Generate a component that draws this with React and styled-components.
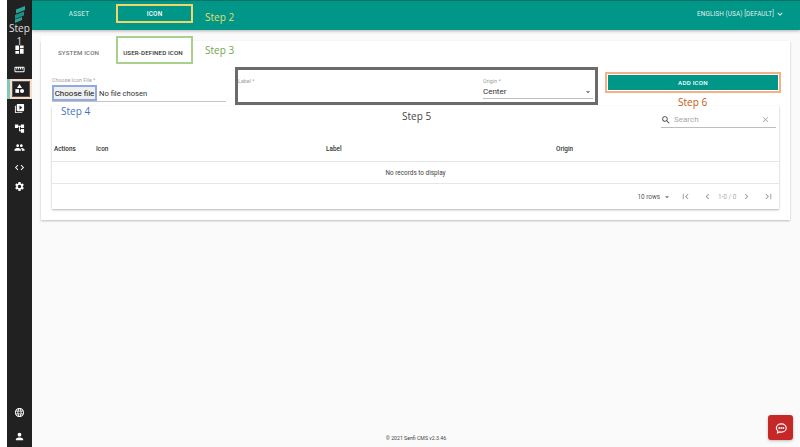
import React from "react";
import styled, { createGlobalStyle } from "styled-components";
import {
  MdDashboard,
  MdStraighten,
  MdCategory,
  MdVideoLibrary,
  MdAccountTree,
  MdPeople,
  MdCode,
  MdSettings,
  MdLanguage,
  MdPerson,
  MdKeyboardArrowDown,
  MdSearch,
  MdClear,
  MdFirstPage,
  MdLastPage,
  MdChevronLeft,
  MdChevronRight,
  MdArrowDropDown,
} from "react-icons/md";

const GlobalStyle = createGlobalStyle`
  html, body {
    margin: 0;
    padding: 0;
    background: #fafafa;
    font-family: Roboto, "Liberation Sans", sans-serif;
    overflow: hidden;
  }
  * { box-sizing: border-box; }
`;

const Page = styled.div`
  position: relative;
  width: 800px;
  height: 447px;
  display: flex;
  background: #fafafa;
  overflow: hidden;
`;

const Gutter = styled.div`
  width: 7px;
  background: #fff;
`;

const Sidebar = styled.nav`
  width: 25px;
  background: #212121;
  color: #fff;
  display: flex;
  flex-direction: column;
  align-items: center;
  padding-top: 6px;
  padding-bottom: 1px;
`;

const Logo = styled.svg`
  width: 12px;
  height: 17px;
  margin-bottom: 17px;
`;

const NavItem = styled.div`
  width: 25px;
  height: 19.6px;
  margin-top: ${({ $gap }) => $gap || 0}px;
  display: flex;
  align-items: center;
  justify-content: center;
  font-size: 11px;
  position: relative;
  ${({ $active }) =>
    $active &&
    `
    &::before {
      content: "";
      position: absolute;
      left: 0;
      top: 0;
      bottom: 0;
      width: 3px;
      background: #7fc9bb;
    }
    &::after {
      content: "";
      position: absolute;
      left: 3px;
      right: 0;
      top: 0;
      bottom: 0;
      border: 2px solid #f8dcc8;
      box-shadow: inset 0 0 0 1px #555;
    }
  `}
`;

const Spacer = styled.div`
  flex: 1;
`;

const Main = styled.div`
  flex: 1;
  display: flex;
  flex-direction: column;
  min-width: 0;
`;

const TopBar = styled.header`
  height: 30px;
  flex: none;
  background: #009688;
  border-top: 1px solid #0a6f66;
  box-shadow: 0 1px 3px rgba(0, 0, 0, 0.3);
  display: flex;
  align-items: center;
  color: #fff;
  padding-left: 10px;
  padding-right: 15px;
`;

const TopTab = styled.div`
  height: 19px;
  width: ${({ $active }) => ($active ? 77 : 74)}px;
  margin-top: -4px;
  display: flex;
  align-items: center;
  justify-content: center;
  font-size: 6.4px;
  font-weight: 500;
  letter-spacing: 0.2px;
  color: ${({ $active }) => ($active ? "#fff" : "rgba(255,255,255,0.72)")};
  border: ${({ $active }) => ($active ? "2px solid #f3d669" : "2px solid transparent")};
`;

const Locale = styled.div`
  margin-left: auto;
  margin-top: -3px;
  display: flex;
  align-items: center;
  gap: 1px;
  font-size: 6.4px;
  letter-spacing: 0.1px;
  color: rgba(255, 255, 255, 0.9);
  svg {
    font-size: 10px;
    color: #fff;
  }
`;

const Content = styled.div`
  flex: 1;
  min-height: 0;
`;

const Card = styled.section`
  margin: 11px 10px 0 9px;
  height: 179px;
  background: #fff;
  box-shadow: 0 1px 2px rgba(0, 0, 0, 0.25);
  padding: 0 11px;
`;

const Tabs = styled.div`
  height: 23px;
  display: flex;
  margin-left: -11px;
`;

const InnerTab = styled.div`
  width: ${({ $active }) => ($active ? 77 : 75)}px;
  height: 28px;
  margin-top: -5px;
  flex: none;
  display: flex;
  align-items: center;
  justify-content: center;
  padding-top: 5px;
  padding-right: ${({ $active }) => ($active ? 3 : 0)}px;
  font-size: 6.2px;
  font-weight: 500;
  letter-spacing: 0.1px;
  white-space: nowrap;
  background: #fff;
  color: ${({ $active }) => ($active ? "#333" : "#757575")};
  border: ${({ $active }) => ($active ? "2px solid #a9d18e" : "2px solid transparent")};
`;

const FormRow = styled.div`
  height: 42px;
  display: flex;
  align-items: flex-start;
`;

const FileField = styled.div`
  width: 174px;
  margin-top: 13px;
  margin-right: 9px;
  flex: none;
`;

const SmallLabel = styled.div`
  font-size: 5.4px;
  line-height: 7px;
  color: #9e9e9e;
`;

const FileRow = styled.div`
  height: 17px;
  margin-top: 1px;
  display: flex;
  align-items: center;
  gap: 2px;
  border-bottom: 1px solid #c4c4c4;
  font-size: 7.6px;
  color: #333;
`;

const FileButton = styled.div`
  width: 45px;
  height: 16px;
  flex: none;
  display: flex;
  align-items: center;
  justify-content: center;
  background: #efefef;
  border: 2px solid #8faadc;
  font-size: 8px;
  color: #111;
`;

const FieldGroup = styled.div`
  width: 363px;
  height: 38px;
  margin-top: 3px;
  margin-right: 7px;
  flex: none;
  border: 3px solid #6b6b6b;
  display: flex;
  padding: 8px 2px 0 0;
`;

const LabelField = styled.div`
  flex: 1;
`;

const OriginField = styled.div`
  width: 110px;
`;

const SelectRow = styled.div`
  height: 14px;
  display: flex;
  align-items: center;
  justify-content: space-between;
  border-bottom: 1px solid #bdbdbd;
  font-size: 8px;
  color: #333;
  svg {
    font-size: 10px;
    color: #666;
  }
`;

const AddBorder = styled.div`
  width: 176px;
  height: 21px;
  margin-top: 8px;
  margin-right: -2px;
  flex: none;
  border: 2px solid #f4b183;
  padding: 1px;
`;

const AddButton = styled.button`
  width: 100%;
  height: 100%;
  display: block;
  padding: 0;
  border: none;
  background: #009688;
  color: #fff;
  font-family: inherit;
  font-size: 6.2px;
  font-weight: 500;
  letter-spacing: 0.2px;
`;

const TableCard = styled.div`
  height: 103px;
  background: #fff;
  box-shadow: 0 1px 2px rgba(0, 0, 0, 0.3);
`;

const Toolbar = styled.div`
  height: 31px;
  display: flex;
  justify-content: flex-end;
  padding-right: 3px;
  padding-top: 7px;
`;

const SearchBox = styled.div`
  width: 115px;
  height: 15px;
  display: flex;
  align-items: center;
  border-bottom: 1px solid #bdbdbd;
  padding: 0 6px 1px 0;
  font-size: 8px;
  color: #a8a8a8;
  svg:first-child {
    font-size: 10px;
    color: #444;
    margin-right: 3px;
  }
  svg:last-child {
    font-size: 9px;
    color: #aaa;
    margin-left: auto;
  }
`;

const HeadRow = styled.div`
  height: 25px;
  display: grid;
  grid-template-columns: 42px 230px 230px 1fr;
  align-items: center;
  padding-left: 2px;
  border-bottom: 1px solid #e6e6e6;
  font-size: 6.4px;
  font-weight: 500;
  color: #333;
`;

const EmptyRow = styled.div`
  height: 22px;
  display: flex;
  align-items: center;
  justify-content: center;
  border-bottom: 1px solid #e6e6e6;
  font-size: 6.4px;
  color: #444;
`;

const Pager = styled.div`
  height: 25px;
  display: flex;
  align-items: center;
  justify-content: flex-end;
  font-size: 6.4px;
  color: #555;
`;

const RowsSelect = styled.div`
  display: flex;
  align-items: center;
  gap: 2px;
  margin-right: 2px;
  svg {
    font-size: 10px;
    color: #777;
  }
`;

const PagerIcon = styled.span`
  width: 22px;
  display: flex;
  justify-content: center;
  font-size: 11px;
  color: ${({ $off }) => ($off ? "#9a9a9a" : "#666")};
`;

const PageCount = styled.span`
  width: 17px;
  text-align: center;
  color: #aaa;
  white-space: nowrap;
`;

const Footer = styled.footer`
  height: 18px;
  flex: none;
  display: flex;
  align-items: flex-start;
  justify-content: center;
  font-size: 5.2px;
  color: #444;
  padding-top: 6px;
`;

const ChatButton = styled.button`
  position: absolute;
  left: 768px;
  top: 415px;
  width: 25px;
  height: 25px;
  padding: 0;
  border: none;
  border-radius: 3px;
  background: #c62828;
  display: flex;
  align-items: center;
  justify-content: center;
  box-shadow: 0 1px 3px rgba(0, 0, 0, 0.25);
`;

const StepNote = styled.span`
  position: absolute;
  left: ${({ $x }) => $x}px;
  top: ${({ $y }) => $y}px;
  font-family: "Open Sans", "Noto Sans", sans-serif;
  font-size: ${({ $size }) => $size || 10}px;
  line-height: 13px;
  color: ${({ $color }) => $color};
  text-align: center;
  white-space: pre-line;
`;

const navIcons = [
  { Icon: MdDashboard },
  { Icon: MdStraighten },
  { Icon: MdCategory, active: true },
  { Icon: MdVideoLibrary },
  { Icon: MdAccountTree },
  { Icon: MdPeople },
  { Icon: MdCode },
  { Icon: MdSettings },
];

const notes = [
  { text: "Step\n1", x: 9, y: 22, color: "#e0e0e0", size: 10 },
  { text: "Step 2", x: 205, y: 11, color: "#e9dc6a", size: 10 },
  { text: "Step 3", x: 205, y: 44, color: "#6ea84a", size: 10 },
  { text: "Step 4", x: 61, y: 105, color: "#4472c4", size: 10 },
  { text: "Step 5", x: 402, y: 110, color: "#444444", size: 10 },
  { text: "Step 6", x: 678, y: 96, color: "#c55a11", size: 10 },
];

const App = () => {
  return (
    <Page>
      <GlobalStyle />
      <Gutter />
      <Sidebar>
        <Logo viewBox="0 0 12 17">
          <path d="M2 3.5 11 0v4L2 7.5z" fill="#26a69a" />
          <path d="M1 9 10 5.5v4L1 13z" fill="#1f8f85" />
          <path d="M1 13.5 8 11v3l-7 3z" fill="#26a69a" />
        </Logo>
        {navIcons.map(({ Icon, active }, i) => (
          <NavItem key={i} $active={active}>
            <Icon />
          </NavItem>
        ))}
        <Spacer />
        <NavItem>
          <MdLanguage />
        </NavItem>
        <NavItem $gap={4}>
          <MdPerson />
        </NavItem>
      </Sidebar>
      <Main>
        <TopBar>
          <TopTab>ASSET</TopTab>
          <TopTab $active>ICON</TopTab>
          <Locale>
            ENGLISH (USA) [DEFAULT]
            <MdKeyboardArrowDown />
          </Locale>
        </TopBar>
        <Content>
          <Card>
            <Tabs>
              <InnerTab>SYSTEM ICON</InnerTab>
              <InnerTab $active>USER-DEFINED ICON</InnerTab>
            </Tabs>
            <FormRow>
              <FileField>
                <SmallLabel>Choose Icon File *</SmallLabel>
                <FileRow>
                  <FileButton>Choose file</FileButton>
                  No file chosen
                </FileRow>
              </FileField>
              <FieldGroup>
                <LabelField>
                  <SmallLabel>Label *</SmallLabel>
                </LabelField>
                <OriginField>
                  <SmallLabel>Origin *</SmallLabel>
                  <SelectRow>
                    Center
                    <MdArrowDropDown />
                  </SelectRow>
                </OriginField>
              </FieldGroup>
              <AddBorder>
                <AddButton>ADD ICON</AddButton>
              </AddBorder>
            </FormRow>
            <TableCard>
              <Toolbar>
                <SearchBox>
                  <MdSearch />
                  Search
                  <MdClear />
                </SearchBox>
              </Toolbar>
              <HeadRow>
                <span>Actions</span>
                <span>Icon</span>
                <span>Label</span>
                <span>Origin</span>
              </HeadRow>
              <EmptyRow>No records to display</EmptyRow>
              <Pager>
                <RowsSelect>
                  10 rows
                  <MdArrowDropDown />
                </RowsSelect>
                <PagerIcon $off>
                  <MdFirstPage />
                </PagerIcon>
                <PagerIcon $off>
                  <MdChevronLeft />
                </PagerIcon>
                <PageCount>1-0 / 0</PageCount>
                <PagerIcon $off>
                  <MdChevronRight />
                </PagerIcon>
                <PagerIcon $off>
                  <MdLastPage />
                </PagerIcon>
              </Pager>
            </TableCard>
          </Card>
        </Content>
        <Footer>© 2021 Senfi CMS v2.3.46</Footer>
      </Main>
      {notes.map((n) => (
        <StepNote key={n.text} $x={n.x} $y={n.y} $color={n.color} $size={n.size}>
          {n.text}
        </StepNote>
      ))}
      <ChatButton aria-label="Chat">
        <svg width="14" height="14" viewBox="0 0 24 24" fill="none" stroke="#fff" strokeWidth="2">
          <path d="M4 12c0-4 3.600-7 8.500-7S21 8 21 12s-3.600 7-8.500 7c-1 0-2-.1-2.800-.4L6 20.500l.6-3.600C5 15.600 4 14 4 12z" />
          <circle cx="9" cy="12" r="0.6" fill="#fff" />
          <circle cx="12.500" cy="12" r="0.6" fill="#fff" />
          <circle cx="16" cy="12" r="0.6" fill="#fff" />
        </svg>
      </ChatButton>
    </Page>
  );
};

export default App;
